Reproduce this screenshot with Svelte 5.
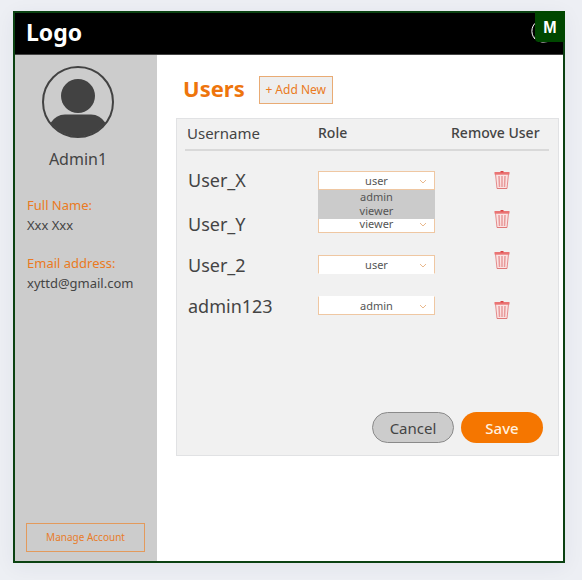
<script>
  let users = $state([
    { name: 'User_X', role: 'user', edge: 'full', trash: 'middle', open: true },
    { name: 'User_Y', role: 'viewer', edge: 'no-top', trash: 'top', open: false },
    { name: 'User_2', role: 'user', edge: 'no-bottom', trash: 'top', open: false },
    { name: 'admin123', role: 'admin', edge: 'no-top', trash: 'bottom', open: false }
  ]);
  const roles = ['user', 'admin', 'viewer'];

  function choose(user, role) {
    user.role = role;
    user.open = false;
  }
  function remove(user) {
    users = users.filter((u) => u.name !== user.name);
  }
</script>

<div class="frame">
  <header>
    <span class="logo">Logo</span>
    <svg class="account" viewBox="0 0 26 26" aria-hidden="true">
      <path d="M9 1.500A11.500 11.500 0 0 0 5 20" fill="none" stroke="#fff" stroke-width="1" />
      <path d="M4 17.500Q8 20.500 13 20.500Q17 20.500 21 21Q18 24 12 23.500Q6 22.500 4 17.500Z" fill="#fff" />
    </svg>
    <span class="badge">M</span>
  </header>

  <div class="body">
    <aside>
      <div class="profile">
        <svg class="avatar" viewBox="0 0 72 72" aria-hidden="true">
          <circle cx="36" cy="36" r="35" fill="none" stroke="#424242" stroke-width="2" />
          <circle cx="36" cy="30" r="17" fill="#424242" />
          <path d="M8.500 57Q14 48.500 23 48.500H49Q58 48.500 63.500 57A35 35 0 0 1 8.500 57Z" fill="#424242" />
        </svg>
        <p class="name">Admin1</p>
      </div>
      <dl>
        <div>
          <dt>Full Name:</dt>
          <dd>Xxx Xxx</dd>
        </div>
        <div>
          <dt>Email address:</dt>
          <dd>xyttd@gmail.com</dd>
        </div>
      </dl>
      <button class="manage" type="button">Manage Account</button>
    </aside>

    <main>
      <div class="title">
        <h1>Users</h1>
        <button class="add" type="button">+ Add New</button>
      </div>

      <section class="panel">
        <table>
          <thead>
            <tr>
              <th class="col-name" scope="col">Username</th>
              <th class="col-role" scope="col">Role</th>
              <th class="col-remove" scope="col">Remove User</th>
            </tr>
          </thead>
          <tbody>
            {#each users as user (user.name)}
              <tr>
                <td class="user">{user.name}</td>
                <td>
                  <div class="picker">
                    <select class={user.edge} aria-label="Role of {user.name}" bind:value={user.role}>
                      {#each roles as role}
                        <option value={role}>{role}</option>
                      {/each}
                    </select>
                    <svg class="chevron" viewBox="0 0 8 5" aria-hidden="true">
                      <path d="M1 1L4 4L7 1" fill="none" stroke="#e9b88c" stroke-width="1" />
                    </svg>
                    {#if user.open}
                      <div class="menu">
                        {#each roles.filter((r) => r !== user.role) as role}
                          <button type="button" onclick={() => choose(user, role)}>{role}</button>
                        {/each}
                      </div>
                    {/if}
                  </div>
                </td>
                <td class="remove {user.trash}">
                  <button type="button" aria-label="Remove {user.name}" onclick={() => remove(user)}>
                    <svg viewBox="0 0 16 18" aria-hidden="true">
                      <path d="M1.500 3L3 17.500H13L14.500 3Z" fill="#fae3e3" stroke="#e58a8a" stroke-width="1" />
                      <path d="M5 5L5.500 16M8 5V16M11 5L10.500 16" fill="none" stroke="#e89a9a" stroke-width="1.500" />
                      <path d="M3 17.500H13" stroke="#e07878" />
                      <rect x="0.500" y="1" width="15" height="2.500" fill="#ea7474" />
                      <rect x="6.500" y="0" width="3" height="1.500" fill="#d94444" />
                    </svg>
                  </button>
                </td>
              </tr>
            {/each}
          </tbody>
        </table>
        <div class="actions">
          <button class="cancel" type="button">Cancel</button>
          <button class="save" type="button">Save</button>
        </div>
      </section>
    </main>
  </div>
</div>

<style>
  :global(body) {
    margin: 0;
    background: #edeff4;
  }
  :global(#app) {
    display: flow-root;
  }
  * {
    box-sizing: border-box;
  }
  .frame {
    display: flex;
    flex-direction: column;
    min-height: calc(100vh - 28px);
    margin: 11px 17px 17px 13px;
    border: 2px solid #0b4212;
    background: #fff;
    box-shadow: 0 4px 20px rgba(40, 50, 80, 0.06);
    font-family: 'Noto Sans', 'Open Sans', sans-serif;
    color: #444;
  }
  button {
    font-family: inherit;
    padding: 0;
    cursor: pointer;
  }
  header {
    position: relative;
    display: flex;
    align-items: flex-start;
    justify-content: space-between;
    height: 42px;
    padding: 0 7px 0 11px;
    background: #000;
    border-bottom: 1px solid #444;
  }
  .logo {
    color: #fff;
    font-size: 23px;
    line-height: 38px;
    font-weight: 700;
  }
  .account {
    width: 26px;
    height: 26px;
    margin-top: 6px;
  }
  .badge {
    position: absolute;
    top: -2px;
    right: -2px;
    width: 30px;
    height: 31px;
    background: #004700;
    border-bottom-left-radius: 4px;
    color: #fff;
    font: 700 16px/34px 'Liberation Sans', sans-serif;
    text-align: center;
  }
  .body {
    display: flex;
    flex: 1;
  }
  aside {
    display: flex;
    flex-direction: column;
    flex: 0 0 142px;
    padding: 11px 12px 9px 11px;
    background: #ccc;
  }
  .profile {
    display: flex;
    flex-direction: column;
    align-items: center;
    gap: 11px;
    width: 104px;
    margin-bottom: 26px;
  }
  .avatar {
    width: 72px;
    height: 72px;
  }
  .name {
    margin: 0;
    font-size: 16px;
    line-height: 20px;
  }
  dl {
    display: flex;
    flex-direction: column;
    gap: 18px;
    margin: 0;
    padding-left: 1px;
    font-size: 13px;
    line-height: 20px;
  }
  dt {
    color: #ea7a22;
  }
  dd {
    margin: 0;
  }
  .manage {
    height: 29px;
    margin-top: auto;
    padding-bottom: 2px;
    border: 1px solid #e39a5c;
    background: transparent;
    color: #e87c2a;
    font-size: 10px;
  }
  main {
    flex: 1;
    min-width: 0;
    padding: 21px 4px 21px 19px;
  }
  .title {
    display: flex;
    align-items: flex-start;
    gap: 14px;
    height: 28px;
    padding-left: 7px;
    margin-bottom: 14px;
  }
  h1 {
    margin: 0;
    color: #ee750c;
    font-size: 22px;
    line-height: 24px;
    font-weight: 700;
  }
  .add {
    width: 74px;
    height: 28px;
    padding-bottom: 2px;
    border: 1px solid #e9ab74;
    background: #eee;
    color: #ea7a22;
    font-size: 12px;
  }
  .panel {
    padding: 0 9px 12px 8px;
    border: 1px solid #e1e2e4;
    background: #f1f1f1;
  }
  table {
    width: 100%;
    table-layout: fixed;
    border-collapse: separate;
    border-spacing: 0;
  }
  th {
    height: 32px;
    padding: 0 0 3px;
    border-bottom: 2px solid #d9d9d9;
    font-size: 14px;
    font-weight: 500;
    text-align: left;
  }
  th.col-name {
    width: 133px;
    padding: 0 0 2px 2px;
    font-size: 15px;
    font-weight: 400;
  }
  th.col-remove {
    width: 108px;
    padding-left: 10px;
  }
  td {
    height: 41px;
    padding: 0;
    vertical-align: middle;
  }
  tbody tr:first-child td {
    height: 46px;
  }
  tbody::before {
    content: '';
    display: block;
    height: 6px;
  }
  .user {
    padding-left: 3px;
    font-size: 18px;
    line-height: 24px;
  }
  .picker {
    position: relative;
    width: 117px;
    height: 19px;
  }
  select {
    display: block;
    appearance: none;
    width: 100%;
    height: 19px;
    padding: 0;
    border: 1px solid #efc7a2;
    border-radius: 0;
    background: #fff;
    color: #555;
    font: 11px/17px 'Noto Sans', sans-serif;
    text-align: center;
    text-align-last: center;
  }
  select.no-top {
    border-top-color: #fff;
  }
  select.no-bottom {
    border-bottom-color: #fff;
  }
  .chevron {
    position: absolute;
    top: 8px;
    right: 8px;
    width: 8px;
    height: 5px;
    pointer-events: none;
  }
  .menu {
    position: absolute;
    top: 100%;
    left: 0;
    z-index: 1;
    display: flex;
    flex-direction: column;
    width: 100%;
    padding-bottom: 1px;
    background: #cbcbcb;
  }
  .menu button {
    height: 14px;
    border: 0;
    background: transparent;
    color: #555;
    font-size: 11px;
    line-height: 12px;
  }
  .remove {
    padding: 0 0 0 53px;
  }
  .remove.top {
    padding-top: 7px;
    vertical-align: top;
  }
  .remove.bottom {
    padding-bottom: 7px;
    vertical-align: bottom;
  }
  .remove button {
    display: block;
    width: 16px;
    height: 18px;
    border: 0;
    background: transparent;
  }
  .remove svg {
    display: block;
    width: 16px;
    height: 18px;
  }
  .actions {
    display: flex;
    justify-content: flex-end;
    gap: 7px;
    padding: 86px 6px 0 0;
  }
  .actions button {
    width: 82px;
    height: 31px;
    border-radius: 16px;
    font-size: 15px;
  }
  .cancel {
    border: 1px solid #8a8a8a;
    background: #ccc;
    color: #444;
  }
  .save {
    border: 0;
    background: #f57600;
    color: #fff0df;
    font-weight: 500;
  }
</style>
